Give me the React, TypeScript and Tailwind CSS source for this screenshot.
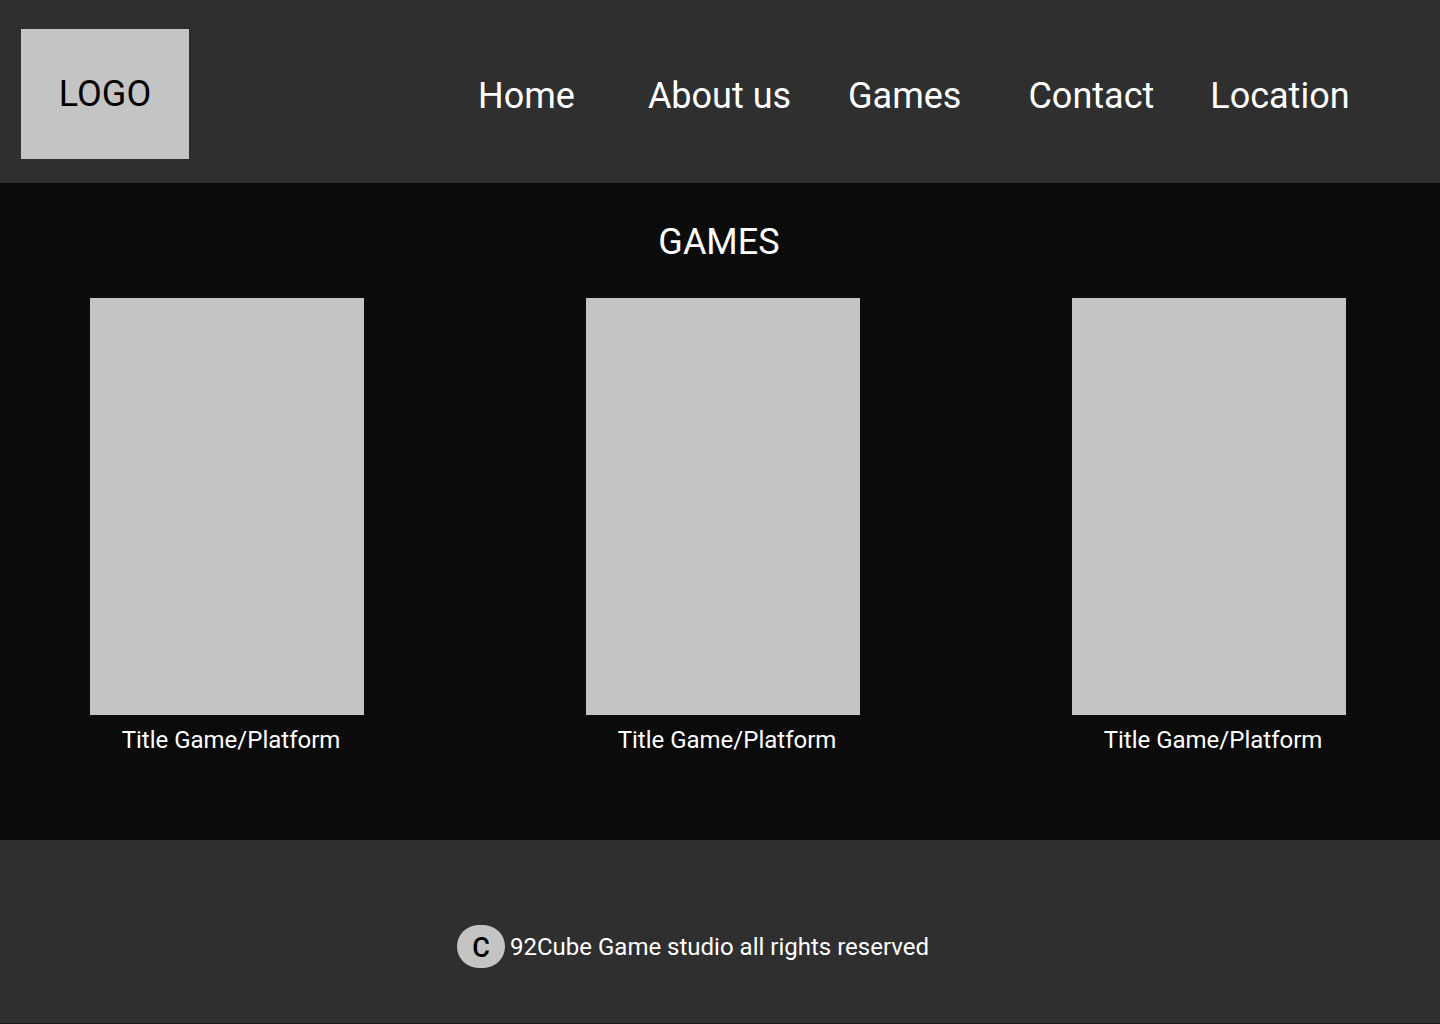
import React from "react";

const games = [
  { ml: "ml-[90px]" },
  { ml: "ml-[222px]" },
  { ml: "ml-[212px]" },
];

export default function App() {
  return (
    <div className="w-[1440px] h-[1024px] flex flex-col font-['Roboto',sans-serif]">
      <header className="h-[183px] bg-[#2f2f2f] flex items-start">
        <div className="ml-[21px] mt-[29px] w-[168px] h-[130px] bg-[#c4c4c4] flex items-center justify-center text-black text-[36px] leading-none">
          LOGO
        </div>
        <nav className="flex items-center h-[192px] text-white text-[36px] leading-none pb-[1px]">
          <a className="ml-[289px]">Home</a>
          <a className="ml-[73px]">About us</a>
          <a className="ml-[57px]">Games</a>
          <a className="ml-[67px]">Contact</a>
          <a className="ml-[56px]">Location</a>
        </nav>
      </header>
      <main className="h-[657px] bg-[#0b0b0b] flex flex-col">
        <h1 className="text-white text-[36px] leading-none text-center mt-[41px] ml-[-2px]">GAMES</h1>
        <div className="flex mt-[38px]">
          {games.map((g, i) => (
            <div key={i} className={`${g.ml} w-[274px] flex flex-col items-center`}>
              <div className="w-[274px] h-[417px] bg-[#c4c4c4]" />
              <div className="text-white text-[24px] leading-none mt-[13px] ml-[8px]">Title Game/Platform</div>
            </div>
          ))}
        </div>
      </main>
      <footer className="flex-1 bg-[#2f2f2f] flex items-start border-b border-[#1a1a1a]">
        <div className="ml-[457px] mt-[85px] flex items-center">
          <div className="w-[48px] h-[43px] rounded-full bg-[#c4c4c4] flex items-center justify-center text-black text-[27px] font-medium leading-none pt-[4px]">
            C
          </div>
          <span className="ml-[5px] text-white text-[24px] leading-none">92Cube Game studio all rights reserved</span>
        </div>
      </footer>
    </div>
  );
}
